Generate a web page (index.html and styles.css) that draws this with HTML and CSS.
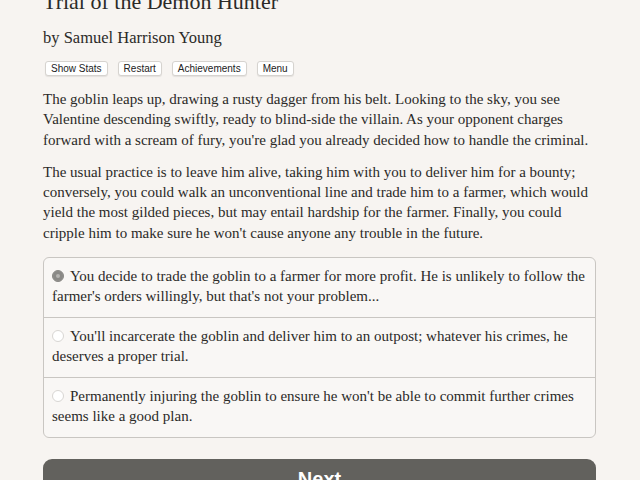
FILE: index.html
```html
<!DOCTYPE html>
<html lang="en">
<head>
    <meta charset="UTF-8">
    <title>Trial of the Demon Hunter</title>
    <link rel="stylesheet" href="styles.css">
</head>
<body>
    <div class="container">
        <h1 class="title">Trial of the Demon Hunter</h1>
        <h2 class="author">by Samuel Harrison Young</h2>
        <div class="buttons">
            <button class="spacedLink">Show Stats</button>
            <button class="spacedLink">Restart</button>
            <button class="spacedLink">Achievements</button>
            <button class="spacedLink">Menu</button>
        </div>
        <div class="text">
            <p>The goblin leaps up, drawing a rusty dagger from his belt. Looking to the sky, you see Valentine descending swiftly, ready to blind-side the villain. As your opponent charges forward with a scream of fury, you're glad you already decided how to handle the criminal.</p>
            <p>The usual practice is to leave him alive, taking him with you to deliver him for a bounty; conversely, you could walk an unconventional line and trade him to a farmer, which would yield the most gilded pieces, but may entail hardship for the farmer. Finally, you could cripple him to make sure he won't cause anyone any trouble in the future.</p>
        </div>
        <form class="choice">
            <label class="option"><span class="radio checked"></span>You decide to trade the goblin to a farmer for more profit. He is unlikely to follow the farmer's orders willingly, but that's not your problem...</label>
            <label class="option"><span class="radio"></span>You'll incarcerate the goblin and deliver him to an outpost; whatever his crimes, he deserves a proper trial.</label>
            <label class="option"><span class="radio"></span>Permanently injuring the goblin to ensure he won't be able to commit further crimes seems like a good plan.</label>
        </form>
        <button class="next">Next</button>
    </div>
</body>
</html>
```
FILE: styles.css
```css
body {
    margin: 0;
    background-color: #f7f4f1;
    color: #2b2a28;
    font-family: "Liberation Serif", serif;
    overflow: hidden;
}
.container {
    width: 553px;
    margin: -13px 0 0 43px;
}
.title {
    font-size: 22px;
    font-weight: normal;
    line-height: 30px;
    margin: 0;
}
.author {
    font-size: 16.5px;
    font-weight: normal;
    line-height: 22px;
    margin: 10px 0 0;
}
.buttons {
    display: flex;
    gap: 10px;
    margin: 12px 0 0 2px;
}
.spacedLink {
    font-family: "Liberation Sans", sans-serif;
    font-size: 10px;
    color: #222;
    background: #fff;
    border: 1px solid #d6d3cf;
    border-radius: 3px;
    padding: 1px 5px;
    height: 15px;
    line-height: 11px;
    box-shadow: 0 1px 1px rgba(0,0,0,0.08);
}
.text {
    margin-top: 13px;
    font-size: 15px;
    line-height: 20.3px;
}
.text p {
    margin: 0;
}
.text p + p {
    margin-top: 12px;
}
.choice {
    margin-top: 14px;
    border: 1px solid #c9c6c2;
    border-radius: 6px;
    background: #f9f7f5;
    font-size: 15px;
    line-height: 20px;
}
.option {
    display: block;
    padding: 8px 2px 11px 8px;
    height: 40px;
}
.option + .option {
    border-top: 1px solid #c9c6c2;
}
.radio {
    display: inline-block;
    width: 10px;
    height: 10px;
    border: 1px solid #d8d6d3;
    border-radius: 50%;
    background: #fff;
    margin: 0 6px 0 0;
    vertical-align: -1px;
}
.radio.checked {
    background: #8a8986;
    border-color: #8a8986;
    box-shadow: inset 0 0 0 3px #8a8986, inset 0 0 0 5px #b5b4b1;
}
.next {
    display: block;
    width: 100%;
    margin-top: 21px;
    height: 44px;
    background: #62615d;
    color: #fff;
    border: none;
    border-radius: 9px;
    font-family: "Liberation Sans", sans-serif;
    font-weight: bold;
    font-size: 20px;
    padding: 0;
    padding-bottom: 4px;
}
```
